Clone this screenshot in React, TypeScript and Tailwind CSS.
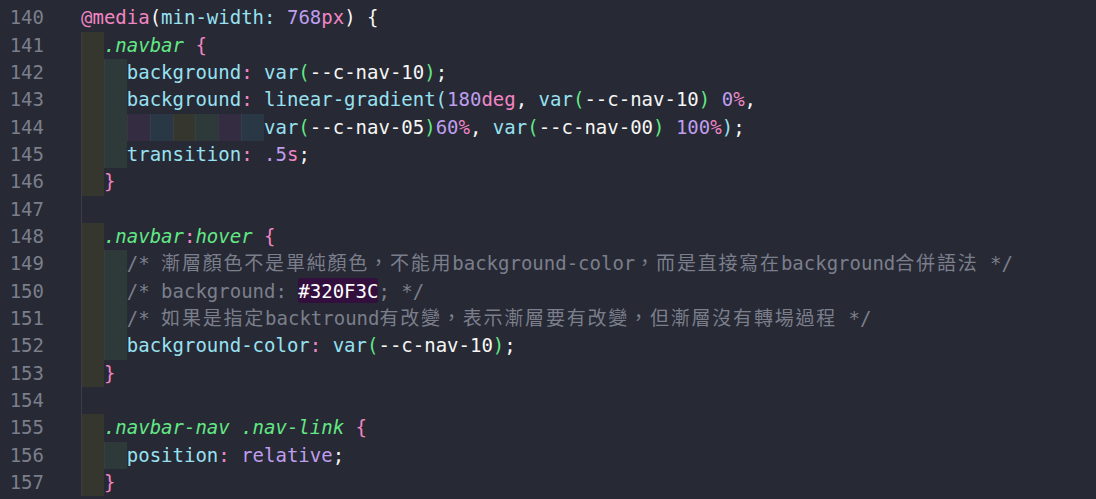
type Tok = [string, string]

interface Line {
  n: number
  indents: string[]
  tokens: Tok[]
}

const p = "text-[#f286c4]"
const c = "text-[#97e1f1]"
const g = "text-[#62e884]"
const gi = "text-[#62e884] italic"
const v = "text-[#bf9eee]"
const f = "text-[#f6f6f4]"
const m = "text-[#7b7f8b]"
const hl = "hl"

// indent-rainbow colours
const Y = "bg-[#35372f]"
const G = "bg-[#2d3a39]"
const P = "bg-[#342c40]"
const B = "bg-[#2a3845]"
const E = "bg-transparent"

const lines: Line[] = [
  {
    n: 140,
    indents: [],
    tokens: [
      ["@media", p],
      ["(", f],
      ["min-width: ", c],
      ["768", v],
      ["px", p],
      [") {", f],
    ],
  },
  { n: 141, indents: [Y], tokens: [[".navbar", gi], [" {", p]] },
  {
    n: 142,
    indents: [Y, G],
    tokens: [
      ["background", c],
      [":", p],
      [" var", c],
      ["(", g],
      ["--c-nav-10", f],
      [")", g],
      [";", f],
    ],
  },
  {
    n: 143,
    indents: [Y, G],
    tokens: [
      ["background", c],
      [":", p],
      [" linear-gradient(", c],
      ["180", v],
      ["deg", p],
      [",", f],
      [" var", c],
      ["(", g],
      ["--c-nav-10", f],
      [")", g],
      [" 0", v],
      ["%", p],
      [",", f],
    ],
  },
  {
    n: 144,
    indents: [Y, G, P, B, Y, G, P, B],
    tokens: [
      ["var", c],
      ["(", g],
      ["--c-nav-05", f],
      [")", g],
      ["60", v],
      ["%", p],
      [",", f],
      [" var", c],
      ["(", g],
      ["--c-nav-00", f],
      [")", g],
      [" 100", v],
      ["%", p],
      [")", c],
      [";", f],
    ],
  },
  {
    n: 145,
    indents: [Y, G],
    tokens: [
      ["transition", c],
      [":", p],
      [" .5", v],
      ["s", p],
      [";", f],
    ],
  },
  { n: 146, indents: [Y], tokens: [["}", p]] },
  { n: 147, indents: [E], tokens: [] },
  {
    n: 148,
    indents: [Y],
    tokens: [
      [".navbar", gi],
      [":", p],
      ["hover", gi],
      [" {", p],
    ],
  },
  {
    n: 149,
    indents: [Y, G],
    tokens: [
      [
        "/* 漸層顏色不是單純顏色，不能用background-color，而是直接寫在background合併語法 */",
        m,
      ],
    ],
  },
  {
    n: 150,
    indents: [Y, G],
    tokens: [
      ["/* background: ", m],
      ["#320F3C", hl],
      ["; */", m],
    ],
  },
  {
    n: 151,
    indents: [Y, G],
    tokens: [
      ["/* 如果是指定backtround有改變，表示漸層要有改變，但漸層沒有轉場過程 */", m],
    ],
  },
  {
    n: 152,
    indents: [Y, G],
    tokens: [
      ["background-color", c],
      [":", p],
      [" var", c],
      ["(", g],
      ["--c-nav-10", f],
      [")", g],
      [";", f],
    ],
  },
  { n: 153, indents: [Y], tokens: [["}", p]] },
  { n: 154, indents: [E], tokens: [] },
  {
    n: 155,
    indents: [Y],
    tokens: [[".navbar-nav .nav-link", gi], [" {", p]],
  },
  {
    n: 156,
    indents: [Y, G],
    tokens: [
      ["position", c],
      [":", p],
      [" relative", v],
      [";", f],
    ],
  },
  { n: 157, indents: [Y], tokens: [["}", p]] },
]

// split off CJK runs so they get the wider advance of the original font
function renderText(text: string, cls: string, key: number) {
  const parts = text.split(/([\u3000-\u9fff\uff00-\uffef]+)/)
  return (
    <span key={key} className={cls}>
      {parts.map((s, i) =>
        i % 2 === 1 ? (
          <span key={i} className="text-[19px] tracking-[1.8px]">
            {s}
          </span>
        ) : (
          s
        )
      )}
    </span>
  )
}

export default function App() {
  return (
    <div className="h-[499px] w-full overflow-hidden bg-[#272935] pt-[4.3px] font-['DejaVu_Sans_Mono','Noto_Sans_CJK_TC',monospace] text-[19px] leading-[27.35px] text-[#f6f6f4]">
      {lines.map((line) => (
        <div key={line.n} className="flex h-[27.35px]">
          <div className="w-[81px] shrink-0 pr-[37px] text-right text-[#7b7f8b]">
            {line.n}
          </div>
          {line.indents.map((bg, i) => (
            <div
              key={i}
              className={`w-[2ch] shrink-0 border-l ${bg} ${
                i === 0 ? "border-[#3a3c48]" : "border-[#ffffff0a]"
              }`}
            />
          ))}
          <div className="whitespace-pre">
            {line.tokens.map(([text, cls], i) =>
              cls === hl ? (
                <span
                  key={i}
                  className="rounded-[3px] bg-[#320f3c] py-[1.5px] text-white"
                >
                  {text}
                </span>
              ) : (
                renderText(text, cls, i)
              )
            )}
          </div>
        </div>
      ))}
    </div>
  )
}
